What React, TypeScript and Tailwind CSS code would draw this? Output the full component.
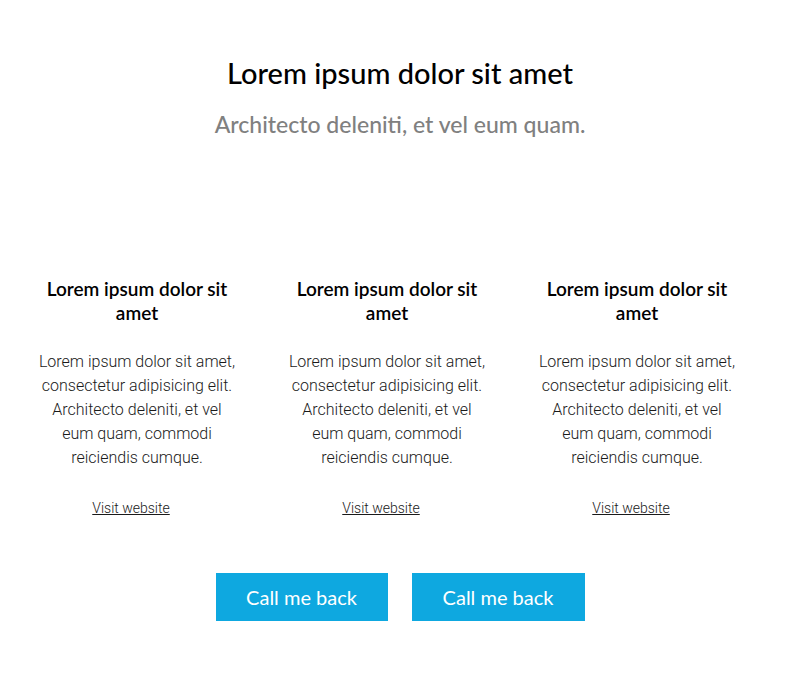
export default function App() {
  const cols = [0, 1, 2];
  const body = { fontFamily: "Roboto, 'Liberation Sans', sans-serif" };
  return (
    <div className="w-[800px] h-[681px] bg-white" style={{ fontFamily: "Lato, 'Noto Sans', sans-serif" }}>
      <div className="flex flex-col items-center pt-[54px]">
        <h1 className="text-[29px] leading-[38px] text-black font-medium">Lorem ipsum dolor sit amet</h1>
        <p className="mt-[17px] text-[23px] leading-[30px] text-[#808080] font-medium">Architecto deleniti, et vel eum quam.</p>
      </div>
      <div className="flex pl-[12px] mt-[138px]">
        {cols.map((i) => (
          <div key={i} className="w-[250px] px-[25px] flex flex-col items-center text-center">
            <h2 className="text-[19px] leading-[24px] font-semibold text-black">Lorem ipsum dolor sit amet</h2>
            <p className="mt-[25px] text-[16px] leading-[24px] text-[#1a1a1a] font-light" style={body}>
              Lorem ipsum dolor sit amet, consectetur adipisicing elit. Architecto deleniti, et vel eum quam, commodi reiciendis cumque.
            </p>
            <a href="#" className="mt-[29px] mr-[12px] text-[14px] leading-[18px] text-[#1a1a1a] font-light underline" style={body}>Visit website</a>
          </div>
        ))}
      </div>
      <div className="flex justify-center gap-[24px] mt-[56px]">
        <button className="w-[172px] h-[48px] bg-[#0ea8e0] text-white text-[20px]">Call me back</button>
        <button className="w-[173px] h-[48px] bg-[#0ea8e0] text-white text-[20px]">Call me back</button>
      </div>
    </div>
  );
}
